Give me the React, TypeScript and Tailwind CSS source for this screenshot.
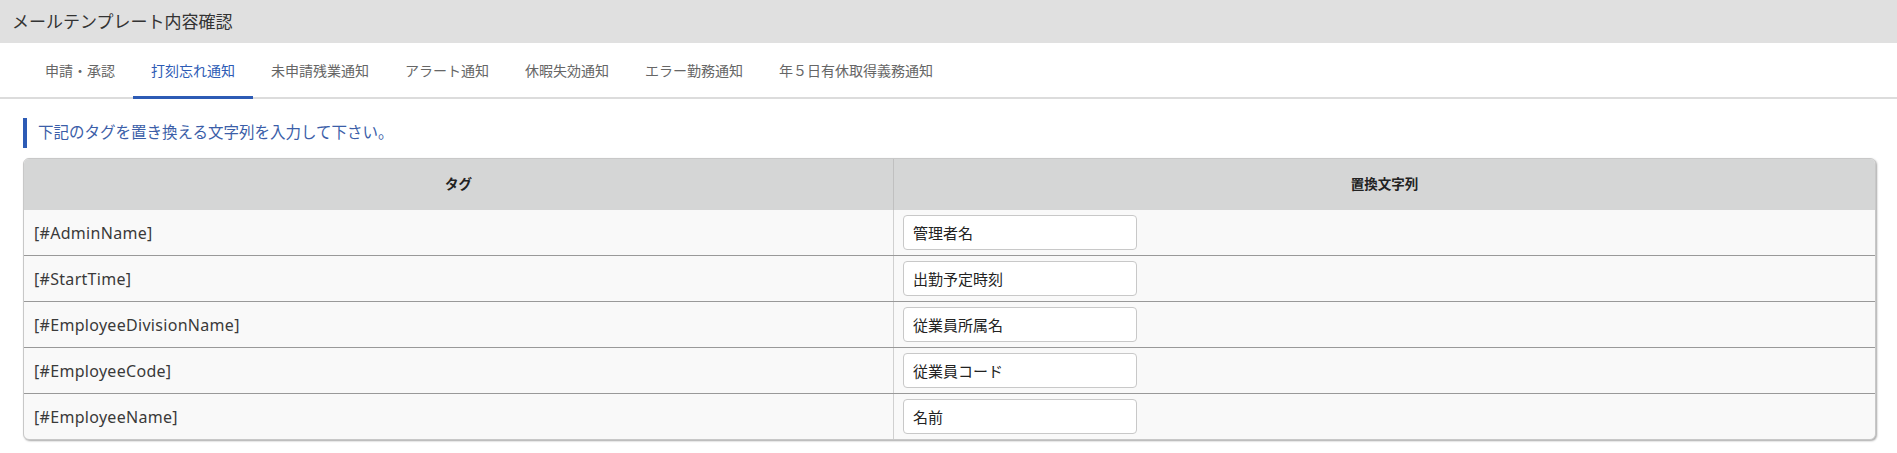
const tabs = [
  "申請・承認",
  "打刻忘れ通知",
  "未申請残業通知",
  "アラート通知",
  "休暇失効通知",
  "エラー勤務通知",
  "年５日有休取得義務通知",
]

const rows = [
  { tag: "[#AdminName]", value: "管理者名" },
  { tag: "[#StartTime]", value: "出勤予定時刻" },
  { tag: "[#EmployeeDivisionName]", value: "従業員所属名" },
  { tag: "[#EmployeeCode]", value: "従業員コード" },
  { tag: "[#EmployeeName]", value: "名前" },
]

export default function App() {
  const active = 1

  return (
    <div className="min-h-[453px] bg-white font-['Noto_Sans','Noto_Sans_CJK_JP',sans-serif] text-[#333]">
      <div className="flex h-[43px] items-center bg-[#e0e0e0] px-[12px] text-[17px] text-[#333]">
        メールテンプレート内容確認
      </div>

      <nav className="flex h-[56px] border-b-2 border-[#dcdcdc] pl-[27px]">
        {tabs.map((t, i) => (
          <div
            key={t}
            className={
              i === active
                ? "-mb-[2px] flex items-center border-b-[3px] border-[#2d5bb5] px-[18px] pt-[2px] text-[14px] text-[#2d5bb5]"
                : "flex items-center px-[18px] text-[14px] text-[#666]"
            }
          >
            {t}
          </div>
        ))}
      </nav>

      <div className="ml-[23px] mt-[19px] flex h-[30px] items-center border-l-4 border-[#2d5bb5] pl-[11px] text-[15.5px] text-[#3b5ea8]">
        下記のタグを置き換える文字列を入力して下さい。
      </div>

      <div className="ml-[23px] mr-[21px] mt-[10px] overflow-hidden rounded-[6px] border border-[#c8c8c8] bg-[#f9f9f9] shadow-[1px_1px_2px_rgba(0,0,0,0.35)]">
        <div className="flex h-[51px] bg-[#d5d6d6] text-[13.5px] font-bold text-[#222]">
          <div className="flex w-[869px] items-center justify-center">タグ</div>
          <div className="flex flex-1 items-center justify-center border-l border-[#c0c0c0]">置換文字列</div>
        </div>
        {rows.map((r, i) => (
          <div
            key={r.tag}
            className={i === 0 ? "flex h-[45px]" : "flex h-[46px] border-t border-[#999]"}
          >
            <div className="flex w-[869px] items-center pl-[10px] text-[16px] tracking-[0.3px] text-[#3a3a3a]">{r.tag}</div>
            <div className="flex flex-1 items-center border-l border-[#d0d0d0] pl-[9px]">
              <input
                defaultValue={r.value}
                className="h-[35px] w-[234px] rounded-[4px] border border-[#c8c8c8] bg-white px-[9px] text-[15px] text-[#222] outline-none"
              />
            </div>
          </div>
        ))}
      </div>
    </div>
  )
}
